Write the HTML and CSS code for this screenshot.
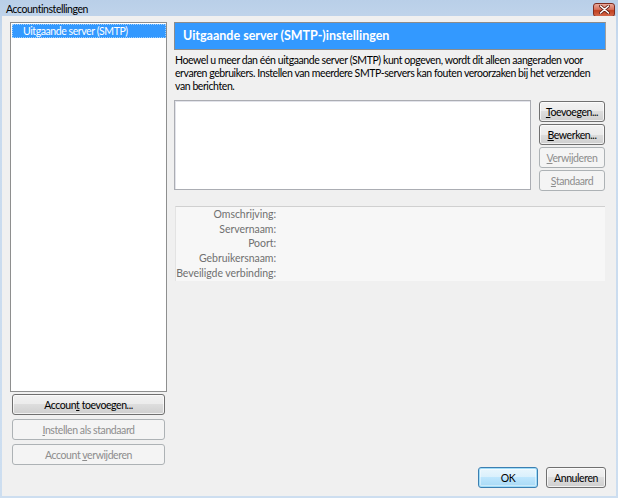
FILE: index.html
```html
<!DOCTYPE html>
<html lang="nl">
  <head>
    <meta charset="UTF-8" />
    <title>Accountinstellingen</title>
    <link rel="stylesheet" href="styles.css">
  </head>
  <body>
    <div class="window">
      <div class="titlebar">
        <span class="title">Accountinstellingen</span>
        <span class="close-btn">
          <svg width="11" height="9" viewBox="0 0 11 9">
            <path d="M1.5 1 L9.5 8 M9.5 1 L1.5 8" stroke="#5a1a10" stroke-width="3" stroke-linecap="round" />
            <path d="M1.5 1 L9.5 8 M9.5 1 L1.5 8" stroke="#ffffff" stroke-width="1.6" stroke-linecap="round" />
          </svg>
        </span>
      </div>

      <div class="client">
        <div class="content">
          <div class="sidebar">
            <div class="account-list">
              <div class="account-item selected">Uitgaande server (SMTP)</div>
            </div>
            <button class="btn side-btn">Accoun<u>t</u> toevoegen...</button>
            <button class="btn side-btn" disabled><u>I</u>nstellen als standaard</button>
            <button class="btn side-btn" disabled>Account <u>v</u>erwijderen</button>
          </div>

          <div class="main">
            <div class="header">Uitgaande server (SMTP-)instellingen</div>
            <p class="intro">
              Hoewel u meer dan één uitgaande server (SMTP) kunt opgeven, wordt dit alleen aangeraden voor
              ervaren gebruikers. Instellen van meerdere SMTP-servers kan fouten veroorzaken bij het verzenden
              van berichten.
            </p>

            <div class="server-row">
              <div class="server-list"></div>
              <div class="server-buttons">
                <button class="btn"><u>T</u>oevoegen...</button>
                <button class="btn"><u>B</u>ewerken...</button>
                <button class="btn" disabled><u>V</u>erwijderen</button>
                <button class="btn" disabled><u>S</u>tandaard</button>
              </div>
            </div>

            <div class="details">
              <div class="detail-label">Omschrijving:</div>
              <div class="detail-label">Servernaam:</div>
              <div class="detail-label">Poort:</div>
              <div class="detail-label">Gebruikersnaam:</div>
              <div class="detail-label">Beveiligde verbinding:</div>
            </div>
          </div>
        </div>

        <div class="dialog-buttons">
          <button class="btn default-btn">OK</button>
          <button class="btn">Annuleren</button>
        </div>
      </div>
    </div>
  </body>
</html>
```

FILE: styles.css
```css
* {
  margin: 0;
  padding: 0;
  box-sizing: border-box;
}
body {
  width: 618px;
  height: 498px;
  overflow: hidden;
  font-family: Lato, "Open Sans", sans-serif;
  font-size: 10.5px;
  letter-spacing: -0.42px;
  color: #000;
  background: #c4d6ea;
}
u {
  text-decoration: underline;
}
.window {
  display: flex;
  flex-direction: column;
  height: 498px;
  background: linear-gradient(to bottom, #b9cfe8, #c8daee 40px, #cddef0);
}
.titlebar {
  height: 16px;
  display: flex;
  align-items: center;
  justify-content: space-between;
  padding: 0 3px 0 6px;
}
.title {
  font-size: 10.5px;
  letter-spacing: -0.45px;
  margin-top: 1px;
}
.close-btn {
  width: 22px;
  height: 14px;
  margin-top: 3px;
  display: flex;
  align-items: center;
  justify-content: center;
  border: 1px solid #7e2c1f;
  border-radius: 3px;
  background: linear-gradient(to bottom, #e9a99b, #d7705a 45%, #c2401f 55%, #d2674a);
}
.client {
  flex: 1;
  display: flex;
  flex-direction: column;
  margin: 0 2px 2px 2px;
  padding: 6px 10px 8px 8px;
  background: #f0f0f0;
}
.content {
  display: flex;
  gap: 7px;
}

/* lijst met accounts links */

.sidebar {
  width: 157px;
  display: flex;
  flex-direction: column;
}
.account-list {
  height: 370px;
  background: #fff;
  border: 1px solid #8e8f8f;
  padding: 1px 0 0 1px;
}
.account-item {
  height: 14px;
  line-height: 14px;
  padding-left: 11px;
  color: #fff;
}
.account-item.selected {
  background: #3399ff;
  outline: 1px dotted #9ccfff;
  outline-offset: -1px;
}
.side-btn {
  margin: 4px 2px 0;
  height: 20px;
}
.side-btn:first-of-type {
  margin-top: 2px;
}

/* knoppen */

.btn {
  font-family: inherit;
  font-size: 10.5px;
  letter-spacing: -0.42px;
  color: #000;
  height: 21px;
  border: 1px solid #707070;
  border-radius: 3px;
  background: linear-gradient(to bottom, #f2f2f2, #ebebeb 50%, #dddddd 50%, #cfcfcf);
  box-shadow: inset 0 0 0 1px rgba(255, 255, 255, 0.7);
}
.btn:disabled {
  color: #8d8d8d;
  border-color: #adb2b5;
  background: #f4f4f4;
  box-shadow: none;
}
.default-btn {
  border-color: #3c7fb1;
  box-shadow: inset 0 0 0 1px #9fdcf8, inset 0 0 0 2px rgba(255, 255, 255, 0.4);
  background: linear-gradient(to bottom, #eaf6fd, #d9f0fc 50%, #bee6fd 50%, #a7d9f5);
}

/* rechterdeel */

.main {
  width: 432px;
  display: flex;
  flex-direction: column;
}
.header {
  height: 28px;
  line-height: 26px;
  padding-left: 8px;
  background: #3399ff;
  color: #fff;
  font-weight: bold;
  font-size: 12.5px;
  letter-spacing: 0;
  border: 1px solid #8c8c8c;
  border-right-color: #a0a0a0;
}
.intro {
  margin-top: 4px;
  line-height: 13px;
  padding-left: 1px;
  color: #000;
}
.server-row {
  display: flex;
  gap: 8px;
  margin-top: 7px;
}
.server-list {
  width: 357px;
  height: 90px;
  background: #fff;
  border: 1px solid #abadb3;
  box-shadow: inset 1px 1px 0 #e2e3ea;
}
.server-buttons {
  width: 66px;
  display: flex;
  flex-direction: column;
  gap: 2px;
  padding-top: 1px;
}
.details {
  margin: 15px 1px 0 1px;
  height: 75px;
  background: #f7f7f7;
  border-top: 1px solid #d0d0d0;
  border-left: 1px solid #e3e3e3;
}
.detail-label {
  width: 100px;
  text-align: right;
  line-height: 14.7px;
  letter-spacing: -0.05px;
  color: #707070;
  white-space: nowrap;
}

/* OK / Annuleren */

.dialog-buttons {
  margin-top: auto;
  display: flex;
  justify-content: flex-end;
  gap: 8px;
}
.dialog-buttons .btn {
  width: 60px;
}
```
